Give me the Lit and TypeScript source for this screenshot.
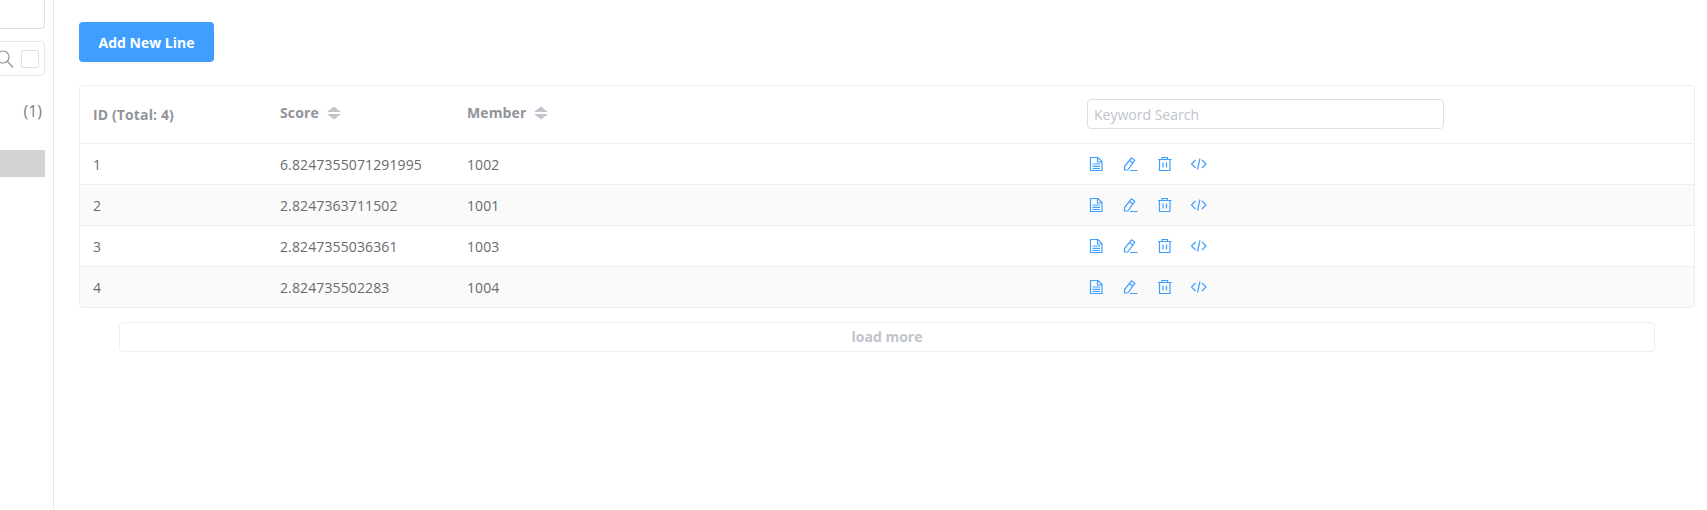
import { LitElement, html, css, svg } from "lit";
import { customElement } from "lit/decorators.js";

const rows = [
  ["1", "6.8247355071291995", "1002"],
  ["2", "2.8247363711502", "1001"],
  ["3", "2.8247355036361", "1003"],
  ["4", "2.824735502283", "1004"],
];

const sortIcon = html`<svg class="sort" viewBox="0 0 14 14"><path d="M7 0.5 L14 6 H0 Z M0 8 H14 L7 13.5 Z" fill="#c0c4cc"/></svg>`;
const icons = [
  svg`<path d="M2.5 1.5H10L14 5.5V14.5H2.5Z M9.5 1.5V6H14 M4.5 8H12 M4.5 10.3H12 M4.5 12.5H12"/>`,
  svg`<path d="M2.5 14V10.5L9.5 1.8L12.8 4.3L5.8 14Z M7.5 4.5L10.8 7 M8 14.5H15.5"/>`,
  svg`<path d="M2 3.5H15.5 M6 3.5V1.5H11.5V3.5 M3.5 3.5V14.5H14V3.5 M7 6.5V11.5 M10.5 6.5V11.5"/>`,
  svg`<path d="M5.5 4L1.5 8L5.5 12 M12 4L16 8L12 12 M10 2.5L7.5 13.5"/>`,
];

@customElement("app-root")
export class AppRoot extends LitElement {
  static styles = css`
    :host {
      display: flex;
      width: 1707px;
      height: 510px;
      overflow: hidden;
      background: #fff;
      font-family: "Open Sans", "Noto Sans", sans-serif;
      font-size: 14px;
      color: #686b70;
    }
    .side {
      width: 53px;
      height: 510px;
      flex: none;
      border-right: 1px solid #e6e6e6;
      overflow: hidden;
      display: flex;
      flex-direction: column;
      align-items: flex-end;
    }
    .topbox {
      width: 60px;
      height: 29px;
      margin-right: 8px;
      border: 1px solid #dcdfe6;
      border-top: 0;
      border-radius: 0 0 4px 0;
      box-sizing: border-box;
      flex: none;
    }
    .searchbox {
      width: 60px;
      height: 35px;
      margin: 12px 8px 0 0;
      border: 1px solid #e4e7ed;
      border-radius: 4px;
      box-sizing: border-box;
      flex: none;
      display: flex;
      align-items: center;
      justify-content: flex-end;
      gap: 7px;
      padding-right: 5px;
    }
    .searchbox svg { width: 18px; height: 18px; flex: none; fill: none; stroke: #909399; stroke-width: 1.2; }
    .check { width: 18px; height: 18px; flex: none; border: 1px solid #dcdfe6; border-radius: 2px; box-sizing: border-box; background: #fff; }
    .count { margin: 23px 11px 0 0; font-size: 16px; color: #808080; line-height: 24px; }
    .grey { width: 60px; height: 27px; margin: 27px 8px 0 0; background: #d3d3d3; flex: none; }

    .main { flex: 1; min-width: 0; padding: 22px 12px 0 25px; box-sizing: border-box; }
    .add {
      display: block;
      width: 135px;
      height: 40px;
      padding: 0;
      border: 0;
      border-radius: 4px;
      background: #409eff;
      color: #fff;
      font: 700 14px "Open Sans", "Noto Sans", sans-serif;
    }
    .table {
      margin-top: 23px;
      border: 1px solid #ebeef5;
      border-radius: 4px;
      overflow: hidden;
    }
    .row {
      display: grid;
      grid-template-columns: 187px 187px 617px 1fr;
      height: 41px;
      align-items: center;
      border-top: 1px solid #ebeef5;
      box-sizing: border-box;
    }
    .row.head { height: 57px; border-top: 0; padding-bottom: 2px; color: #909399; font-weight: 700; }
    .row:nth-child(odd):not(.head) { background: #fafafa; }
    .row > div { padding-left: 13px; white-space: nowrap; }
    .row .cell { letter-spacing: 0.12px; }
    .th { display: flex; align-items: center; gap: 8px; letter-spacing: 0.12px; }
    .sort { width: 14px; height: 14px; flex: none; }
    .shift { position: relative; top: -1px; }
    .row .idh { position: relative; top: 1px; letter-spacing: 0.12px; }
    .search {
      display: block;
      width: 357px;
      height: 30px;
      margin-left: 3px;
      border: 1px solid #dcdfe6;
      border-radius: 4px;
      padding: 2px 5px 0 6px;
      box-sizing: border-box;
      font: 14px "Open Sans", "Noto Sans", sans-serif;
      color: #606266;
      outline: none;
    }
    .search::placeholder { color: #c0c4cc; opacity: 1; }
    .row .ops { display: flex; gap: 18px; padding-left: 17px; }
    .ops svg { width: 16px; height: 16px; flex: none; overflow: visible; fill: none; stroke: #409eff; stroke-width: 1.2; }
    .more {
      display: block;
      width: 1536px;
      height: 30px;
      margin: 14px 0 0 40px;
      padding: 0 0 2px;
      border: 1px solid #ebeef5;
      border-radius: 4px;
      background: #fff;
      color: #c0c4cc;
      font: 700 14px "Open Sans", "Noto Sans", sans-serif;
    }
  `;

  render() {
    return html`
      <aside class="side">
        <div class="topbox"></div>
        <div class="searchbox">
          <svg viewBox="0 0 18 18"><circle cx="7" cy="7" r="6"/><path d="M11.5 11.5L17 17.5"/></svg>
          <span class="check"></span>
        </div>
        <div class="count">(1)</div>
        <div class="grey"></div>
      </aside>
      <main class="main">
        <button class="add">Add New Line</button>
        <section class="table">
          <div class="row head">
            <div class="idh">ID (Total: 4)</div>
            <div class="th shift">Score ${sortIcon}</div>
            <div class="th shift">Member ${sortIcon}</div>
            <div><input class="search" placeholder="Keyword Search" /></div>
          </div>
          ${rows.map(
            (r) => html`<div class="row">
              <div class="cell">${r[0]}</div>
              <div class="cell">${r[1]}</div>
              <div class="cell">${r[2]}</div>
              <div class="ops">
                ${icons.map((p) => html`<svg viewBox="0 0 16 16">${p}</svg>`)}
              </div>
            </div>`
          )}
        </section>
        <button class="more">load more</button>
      </main>
    `;
  }
}
